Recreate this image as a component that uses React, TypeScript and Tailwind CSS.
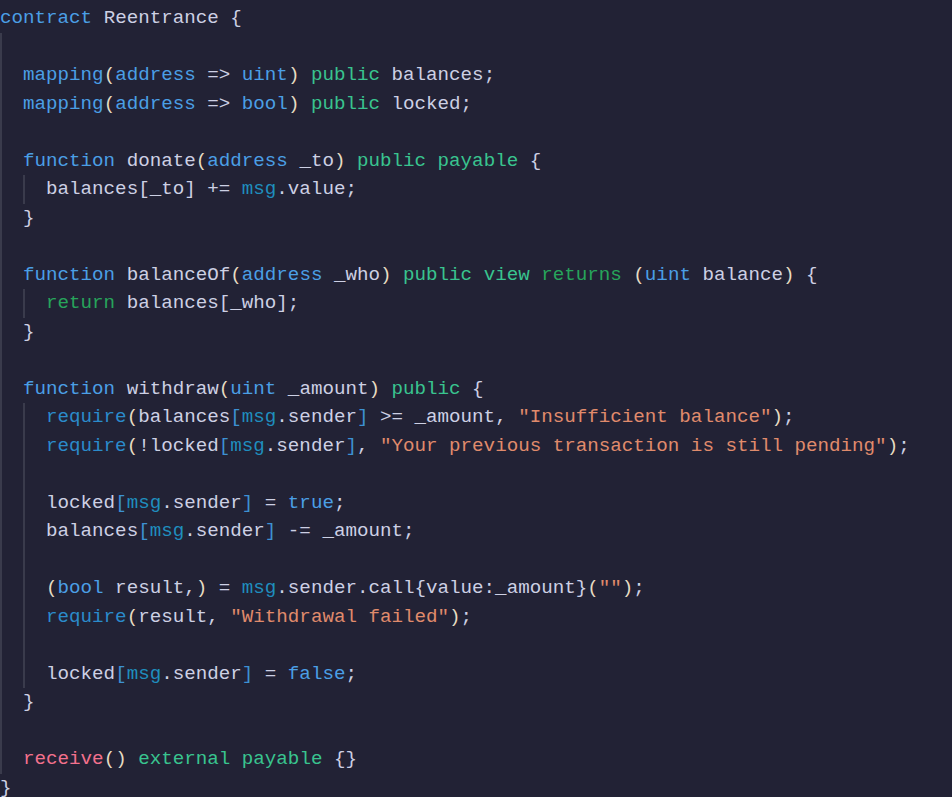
type Tok = string | [string, string];
type Line = { g: number; t: Tok[] };

// token colours
const K = 'text-[#4b9fe5]'; // keywords / types
const M = 'text-[#39c48f]'; // public, payable, view...
const R = 'text-[#27a45b]'; // return(s)
const Q = 'text-[#2b8bcb]'; // require
const G = 'text-[#1f8ebe]'; // msg
const S = 'text-[#e08b6c]'; // strings
const F = 'text-[#f3718d]'; // receive
const P = 'text-[#e6dcc2]'; // parens
const B = 'text-[#3d91d2]'; // [ ] around msg.sender

const msgSender: Tok[] = [[B, '['], [G, 'msg'], '.sender', [B, ']']];

const lines: Line[] = [
  { g: 0, t: [[K, 'contract'], ' Reentrance {'] },
  { g: 1, t: [] },
  { g: 1, t: [[K, 'mapping'], [P, '('], [K, 'address'], ' => ', [K, 'uint'], [P, ')'], ' ', [M, 'public'], ' balances;'] },
  { g: 1, t: [[K, 'mapping'], [P, '('], [K, 'address'], ' => ', [K, 'bool'], [P, ')'], ' ', [M, 'public'], ' locked;'] },
  { g: 1, t: [] },
  { g: 1, t: [[K, 'function'], ' donate', [P, '('], [K, 'address'], ' _to', [P, ')'], ' ', [M, 'public'], ' ', [M, 'payable'], ' {'] },
  { g: 2, t: ['balances[_to] += ', [G, 'msg'], '.value;'] },
  { g: 1, t: ['}'] },
  { g: 1, t: [] },
  {
    g: 1,
    t: [[K, 'function'], ' balanceOf', [P, '('], [K, 'address'], ' _who', [P, ')'], ' ', [M, 'public'], ' ', [M, 'view'], ' ', [R, 'returns'], ' ', [P, '('], [K, 'uint'], ' balance', [P, ')'], ' {'],
  },
  { g: 2, t: [[R, 'return'], ' balances[_who];'] },
  { g: 1, t: ['}'] },
  { g: 1, t: [] },
  { g: 1, t: [[K, 'function'], ' withdraw', [P, '('], [K, 'uint'], ' _amount', [P, ')'], ' ', [M, 'public'], ' {'] },
  { g: 2, t: [[Q, 'require'], [P, '('], 'balances', ...msgSender, ' >= _amount, ', [S, '"Insufficient balance"'], [P, ')'], ';'] },
  { g: 2, t: [[Q, 'require'], [P, '('], '!locked', ...msgSender, ', ', [S, '"Your previous transaction is still pending"'], [P, ')'], ';'] },
  { g: 2, t: [] },
  { g: 2, t: ['locked', ...msgSender, ' = ', [K, 'true'], ';'] },
  { g: 2, t: ['balances', ...msgSender, ' -= _amount;'] },
  { g: 2, t: [] },
  { g: 2, t: [[P, '('], [K, 'bool'], ' result,', [P, ')'], ' = ', [G, 'msg'], '.sender.call{value:_amount}', [P, '('], [S, '""'], [P, ')'], ';'] },
  { g: 2, t: [[Q, 'require'], [P, '('], 'result, ', [S, '"Withdrawal failed"'], [P, ')'], ';'] },
  { g: 2, t: [] },
  { g: 2, t: ['locked', ...msgSender, ' = ', [K, 'false'], ';'] },
  { g: 1, t: ['}'] },
  { g: 1, t: [] },
  { g: 1, t: [[F, 'receive'], [P, '()'], ' ', [M, 'external'], ' ', [M, 'payable'], ' {}'] },
  { g: 0, t: ['}'] },
];

export default function App() {
  return (
    <div
      className="min-h-screen w-full bg-[#222235] pt-[4px] text-[19.2px] leading-[28.5px] text-[#cdd0e4]"
      style={{ fontFamily: '"Liberation Mono", "DejaVu Sans Mono", monospace' }}
    >
      {lines.map((line, i) => (
        <div key={i} className="flex h-[28.5px] whitespace-pre">
          {Array.from({ length: line.g }).map((_, j) => (
            <span key={j} className="inline-block h-full w-[2ch] shrink-0 border-l-2 border-[#3a3b4c]" />
          ))}
          <span>
            {line.t.map((tok, k) =>
              typeof tok === 'string' ? (
                <span key={k}>{tok}</span>
              ) : (
                <span key={k} className={tok[0]}>
                  {tok[1]}
                </span>
              )
            )}
          </span>
        </div>
      ))}
    </div>
  );
}
